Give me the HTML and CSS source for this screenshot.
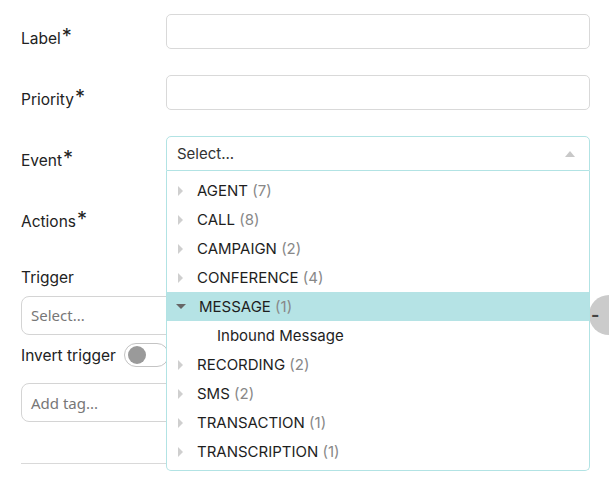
FILE: index.html
```html
<!DOCTYPE html>
<html lang="en">
<head>
    <meta charset="UTF-8">
    <meta name="viewport" content="width=device-width, initial-scale=1.0">
    <title>Webhook rule</title>
    <link rel="stylesheet" href="styles.css">
</head>
<body>
    <div class="form">
        <div class="row">
            <label class="label">Label<span class="req">*</span></label>
            <input class="text-input" type="text">
        </div>
        <div class="row">
            <label class="label">Priority<span class="req">*</span></label>
            <input class="text-input" type="text">
        </div>
        <div class="row">
            <label class="label">Event<span class="req">*</span></label>
            <div class="event-select">
                <div class="event-control">
                    <span>Select...</span>
                    <span class="caret-up"></span>
                </div>
                <ul class="menu">
                    <li class="group"><span class="tri"></span>AGENT <span class="count">(7)</span></li>
                    <li class="group"><span class="tri"></span>CALL <span class="count">(8)</span></li>
                    <li class="group"><span class="tri"></span>CAMPAIGN <span class="count">(2)</span></li>
                    <li class="group"><span class="tri"></span>CONFERENCE <span class="count">(4)</span></li>
                    <li class="group open"><span class="tri"></span>MESSAGE <span class="count">(1)</span></li>
                    <li class="child">Inbound Message</li>
                    <li class="group"><span class="tri"></span>RECORDING <span class="count">(2)</span></li>
                    <li class="group"><span class="tri"></span>SMS <span class="count">(2)</span></li>
                    <li class="group"><span class="tri"></span>TRANSACTION <span class="count">(1)</span></li>
                    <li class="group"><span class="tri"></span>TRANSCRIPTION <span class="count">(1)</span></li>
                </ul>
            </div>
        </div>
        <div class="row">
            <label class="label">Actions<span class="req">*</span></label>
            <input class="text-input" type="text">
        </div>

        <div class="trigger">
            <div class="trigger-title">Trigger</div>
            <div class="trigger-row">
                <div class="round-input">Select...</div>
                <button class="remove">-</button>
            </div>
            <div class="invert">
                <span>Invert trigger</span>
                <span class="toggle"><span class="knob"></span></span>
            </div>
            <div class="round-input tags">Add tag...</div>
        </div>
        <hr class="divider">
    </div>
</body>
</html>
```

FILE: styles.css
```css
body {
    margin: 0;
    overflow: hidden;
    font-family: Inter, "DejaVu Sans", sans-serif;
    color: #222;
    background: #fff;
}
.form {
    padding: 14px 0 13px 21px;
}
.row {
    display: flex;
    align-items: center;
    height: 35px;
    margin-bottom: 26px;
}
.label {
    width: 145px;
    flex: none;
    font-size: 15.5px;
    padding-top: 12px;
}
.req {
    font-size: 20px;
    line-height: 1;
    position: relative;
    top: -1px;
    margin-left: 1px;
}
.text-input {
    width: 424px;
    height: 35px;
    box-sizing: border-box;
    border: 1px solid #d9d9d9;
    border-radius: 5px;
    margin: 0;
}
.event-select {
    position: relative;
    width: 424px;
}
.event-control {
    height: 35px;
    box-sizing: border-box;
    border: 1px solid #b2e3e4;
    border-radius: 5px 5px 0 0;
    display: flex;
    align-items: center;
    justify-content: space-between;
    padding: 0 14px 0 10px;
    font-size: 15px;
    color: #333;
}
.caret-up {
    width: 0;
    height: 0;
    border-left: 5px solid transparent;
    border-right: 5px solid transparent;
    border-bottom: 6px solid #c8c8c8;
}
.menu {
    position: absolute;
    z-index: 5;
    top: 35px;
    left: 0;
    right: 0;
    margin: 0;
    padding: 5px 0 4px;
    list-style: none;
    background: #fff;
    border: 1px solid #b2e3e4;
    border-top: 0;
    border-radius: 0 0 5px 5px;
}
.menu li {
    height: 29px;
    display: flex;
    align-items: center;
    font-size: 15px;
    color: #1e1e1e;
    white-space: pre;
}
.tri {
    width: 0;
    height: 0;
    margin: 0 14px 0 11px;
    border-top: 5px solid transparent;
    border-bottom: 5px solid transparent;
    border-left: 5px solid #cfcfcf;
}
.group.open {
    background: #b5e3e5;
}
.group.open .tri {
    margin: 0 13px 0 9px;
    border-left: 5px solid transparent;
    border-right: 5px solid transparent;
    border-top: 5px solid #666;
    border-bottom: 0;
}
.count {
    color: #888;
}
.child {
    padding-left: 50px;
}
.trigger {
    margin-top: 36px;
}
.trigger-title {
    font-size: 15.5px;
    margin-bottom: 8px;
}
.trigger-row {
    display: flex;
    align-items: center;
}
.round-input {
    flex: none;
    width: 564px;
    height: 39px;
    box-sizing: border-box;
    border: 1px solid #d4d4d4;
    border-radius: 8px;
    padding: 0 9px;
    display: flex;
    align-items: center;
    font-family: "Noto Sans", sans-serif;
    font-size: 15px;
    color: #777;
}
.remove {
    flex: none;
    width: 40px;
    height: 40px;
    margin-left: 4px;
    border: none;
    border-radius: 50%;
    background: #cbcbcb;
    color: #444;
    font-family: Inter, sans-serif;
    font-size: 18px;
    font-weight: bold;
    text-align: left;
    padding: 0 0 2px 2px;
}
.invert {
    display: flex;
    align-items: center;
    height: 24px;
    margin: 8px 0 16px;
    font-size: 15.5px;
}
.toggle {
    margin-left: 8px;
    width: 40px;
    height: 22px;
    border: 1px solid #c4c4c4;
    border-radius: 12px;
    display: flex;
    align-items: center;
    padding-left: 3px;
}
.knob {
    width: 18px;
    height: 18px;
    border-radius: 50%;
    background: #9a9a9a;
}
.tags {
    width: 200px;
}
.divider {
    margin: 41px 0 0;
    width: 569px;
    border: 0;
    border-top: 1px solid #d9d9d9;
}
```
